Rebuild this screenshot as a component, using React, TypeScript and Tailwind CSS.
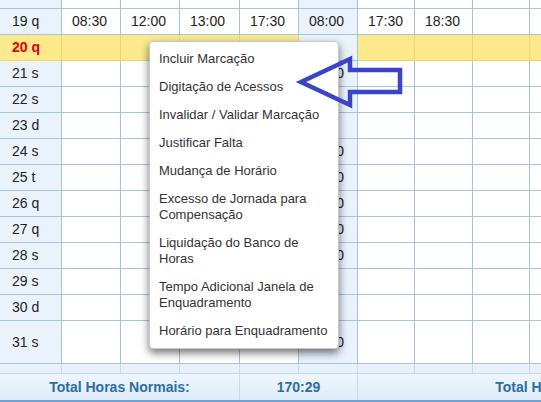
import { Fragment } from 'react';

const colW = [
  'w-[62px]',
  'w-[59px]',
  'w-[59px]',
  'w-[60px]',
  'w-[59px]',
  'w-[59px]',
  'w-[57px]',
  'w-[58px]',
  'w-[57px]',
  'w-[243px]',
];

type Day = { label: string; cells: string[]; tall?: boolean };

const days: Day[] = [
  { label: '21 s', cells: ['', '', '', '', '08:00'] },
  { label: '22 s', cells: [] },
  { label: '23 d', cells: [] },
  { label: '24 s', cells: ['', '', '', '', '08:00'] },
  { label: '25 t', cells: ['', '', '', '', '08:00'] },
  { label: '26 q', cells: ['', '', '', '', '08:00'] },
  { label: '27 q', cells: ['', '', '', '', '08:00'] },
  { label: '28 s', cells: ['', '', '', '', '08:00'] },
  { label: '29 s', cells: [] },
  { label: '30 d', cells: [] },
  { label: '31 s', cells: ['', '', '', '', '08:00'], tall: true },
];

const menu = [
  'Incluir Marcação',
  'Digitação de Acessos',
  'Invalidar / Validar Marcação',
  'Justificar Falta',
  'Mudança de Horário',
  'Excesso de Jornada para Compensação',
  'Liquidação do Banco de Horas',
  'Tempo Adicional Janela de Enquadramento',
  'Horário para Enquadramento',
];

function Row({
  cells,
  height,
  yellow,
}: {
  cells: string[];
  height: string;
  yellow?: boolean;
}) {
  return (
    <div className={`flex ${height}`}>
      {colW.map((w, i) => {
        const blue = i === 0 || i === 5;
        let bg = 'bg-white border-[#a3c4dd]';
        if (yellow && i !== 5) bg = 'bg-[#fbe98c] border-[#f0d66a]';
        else if (blue) bg = 'bg-[#eaf3fc] border-[#a3c4dd]';
        return (
          <div
            key={i}
            className={`${w} ${bg} shrink-0 flex items-center border-r border-b ${
              i === 0 ? 'pl-[12px]' : 'pl-[10px]'
            }`}
          >
            {yellow && i === 0 ? (
              <span className="font-bold text-[#e00000]">{cells[0]}</span>
            ) : (
              cells[i] ?? ''
            )}
          </div>
        );
      })}
    </div>
  );
}

export default function App() {
  return (
    <div className="relative h-[402px] w-[541px] overflow-hidden bg-white text-[14px] text-[#222] font-['Liberation_Sans',Arial,sans-serif]">
      <div className="w-[773px]">
        <Row cells={[]} height="h-[9px]" />
        <Row
          cells={['19 q', '08:30', '12:00', '13:00', '17:30', '08:00', '17:30', '18:30']}
          height="h-[26px]"
        />
        <Row cells={['20 q']} height="h-[26px]" yellow />
        {days.map((d) => (
          <Fragment key={d.label}>
            <Row cells={[d.label, ...d.cells]} height={d.tall ? 'h-[43px]' : 'h-[26px]'} />
          </Fragment>
        ))}

        {/* thin spacer row */}
        <div className="flex h-[10px]">
          {colW.map((w, i) => (
            <div
              key={i}
              className={`${w} shrink-0 border-r border-b border-[#c5dbec] bg-[#e8f1fa]`}
            />
          ))}
        </div>

        {/* totals */}
        <div className="flex h-[28px] border-b-2 border-[#6fa3d6] bg-gradient-to-b from-[#eef5fc] to-[#dfecf9] font-bold text-[#2e6e9e]">
          <div className="flex w-[240px] shrink-0 items-center justify-center border-r border-[#c5dbec]">
            Total Horas Normais:
          </div>
          <div className="flex w-[118px] shrink-0 items-center justify-center border-r border-[#c5dbec]">
            170:29
          </div>
          <div className="flex flex-1 items-center justify-center">Total Horas Normais:</div>
        </div>
      </div>

      {/* context menu */}
      <div className="absolute left-[149px] top-[41px] w-[190px] rounded-[4px] border border-[#c8c8c8] bg-white pt-[3px] pb-[3px] text-[13px] leading-[16px] text-[#333] shadow-[0_4px_9px_rgba(0,0,0,0.55)]">
        {menu.map((m) => (
          <div key={m} className="py-[6px] pl-[9px] pr-[6px]">
            {m}
          </div>
        ))}
      </div>

      {/* annotation arrow */}
      <svg className="absolute left-0 top-0" width="541" height="402" viewBox="0 0 541 402">
        <polygon
          points="301,82 350,59 350,70 400,70 400,92 350,92 350,105"
          fill="none"
          stroke="#3a44c8"
          strokeWidth="4.5"
          strokeLinejoin="miter"
        />
      </svg>
    </div>
  );
}
